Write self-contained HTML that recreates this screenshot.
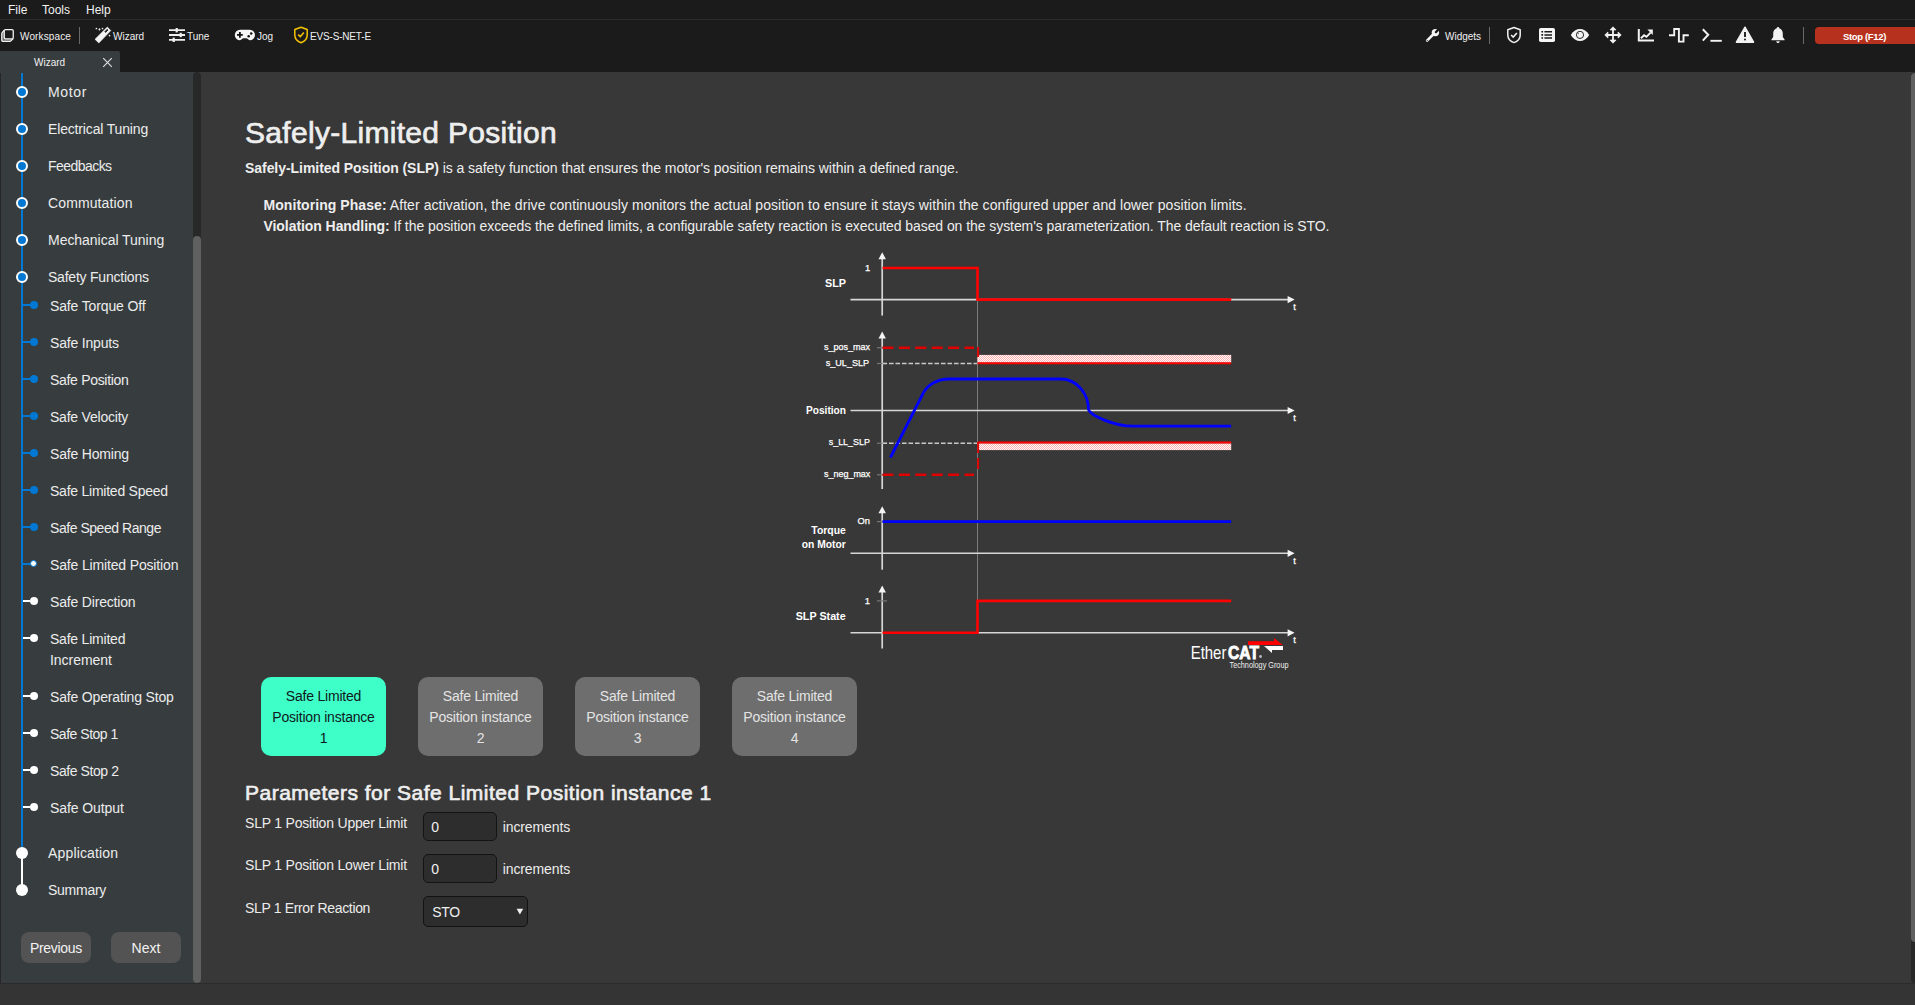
<!DOCTYPE html>
<html><head><meta charset="utf-8">
<style>
html,body{margin:0;padding:0;}
body{width:1915px;height:1005px;overflow:hidden;background:#1b1b1b;position:relative;font-family:"Liberation Sans",sans-serif;color:#eeeeee;}
.a{position:absolute;white-space:nowrap;}
#menubar{left:0;top:0;width:1915px;height:19px;background:#1b1b1b;}
#menuline{left:0;top:19px;width:1915px;height:1px;background:#2c2c2c;}
.menu{font-size:12px;top:3px;color:#f2f2f2;}
.tb{font-size:10px;color:#f0f0f0;top:31.2px;}
.sep{width:1px;background:#6a6a6a;}
#tab{left:0;top:51px;width:120px;height:22px;background:#373d3f;border-radius:0 2px 0 0;}
#sidebar{left:0;top:72px;width:201px;height:911px;background:#373d3f;}
#sideborder{left:0;top:73px;width:1px;height:910px;background:#262626;}
#strack{left:193px;top:72px;width:8px;height:911px;background:#282828;border-radius:4px;}
#sthumb{left:193px;top:236px;width:8px;height:747px;background:#606060;border-radius:4px;}
#main{left:201px;top:72px;width:1714px;height:911px;background:#383838;}
#rtrack{left:1911px;top:72px;width:4px;height:911px;background:#282828;border-radius:4px 0 0 4px;}
#rthumb{left:1911px;top:73px;width:4px;height:869px;background:#606060;border-radius:4px 0 0 4px;}
#bottom{left:0;top:983px;width:1915px;height:22px;background:#343434;}
#bottomline{left:0;top:983px;width:1915px;height:1px;background:#2b2b2b;}
.si{font-size:14px;color:#ececec;}
.vline{background:#0078d4;width:2px;}
.big{width:8px;height:8px;border:2px solid #fff;background:#0078d4;border-radius:50%;}
.bigw{width:12px;height:12px;background:#fff;border-radius:50%;}
.hcon{height:2px;width:8px;background:#0078d4;}
.dot{width:8px;height:8px;border-radius:50%;background:#0078d4;}
.btn{background:#535353;border-radius:8px;font-size:14px;color:#f2f2f2;text-align:center;line-height:33px;height:31px;width:70px;}
.inst{width:125px;height:79px;border-radius:9px;background:#6e6e6e;color:#e2e2e2;font-size:14px;text-align:center;line-height:21px;box-sizing:border-box;padding-top:7px;white-space:normal;}
.inst.on{background:#3cffc8;color:#1e1e1e;}
.lbl{font-size:14px;color:#e6e6e6;}
.inp{background:#2c2c2c;border:1px solid #111;border-radius:5px;box-sizing:border-box;height:29px;width:74px;}
</style></head>
<body>
<div id="menubar" class="a"></div>
<div id="menuline" class="a"></div>
<div class="a menu" style="left:8px;">File</div>
<div class="a menu" style="left:42px;">Tools</div>
<div class="a menu" style="left:86px;">Help</div>

<div id="main" class="a"></div>
<div id="bottom" class="a"></div>
<div id="bottomline" class="a"></div>
<div id="tab" class="a"></div>
<div id="sidebar" class="a"></div>
<div id="sideborder" class="a"></div>
<div id="strack" class="a"></div>
<div id="sthumb" class="a"></div>
<div id="rtrack" class="a"></div>
<div id="rthumb" class="a"></div>


<!-- toolbar left -->
<svg class="a" style="left:0;top:25px" width="18" height="20" viewBox="0 0 18 20">
  <path d="M1.8 8.2 L4.25 5.4 V13.85 H13.25 L10.6 16.4 H1.8 Z" fill="#6a6a6a"/>
  <path d="M4.3 5.2 L2.3 7.4 Q1.8 7.9 1.8 8.8 V15.6 Q1.8 16.4 2.6 16.4 H9.9 Q10.4 16.4 10.9 15.9 L13.2 13.6" fill="none" stroke="#f2f2f2" stroke-width="1.3" stroke-linejoin="round"/>
  <rect x="4.25" y="4.55" width="9" height="9.3" rx="1.3" fill="#1b1b1b" stroke="#f2f2f2" stroke-width="1.3"/>
</svg>
<div class="a tb" style="left:20px;letter-spacing:0.13px">Workspace</div>
<div class="a sep" style="left:79px;top:27px;height:17px"></div>
<svg class="a" style="left:90px;top:24px" width="24" height="22" viewBox="0 0 24 22">
  <path d="M5 15.3 L8.8 19 L20.8 6.6 L17.3 3.1 Z" fill="#f4f4f4" stroke="#f4f4f4" stroke-width="0.6" stroke-linejoin="round"/>
  <path d="M15.6 8.4 L17.9 6 L17.2 5.3 L14.9 7.7 Z" fill="#1b1b1b" stroke="#1b1b1b" stroke-width="0.9" stroke-linejoin="round"/>
  <circle cx="6.4" cy="4.5" r="0.85" fill="#eee"/><path d="M9.5 3.9 L10.6 5.6 L9.5 6.8 L8.3 5.6 Z" fill="#eee"/><circle cx="12.5" cy="4.5" r="0.85" fill="#eee"/><circle cx="19.5" cy="11.6" r="0.85" fill="#eee"/>
</svg>
<div class="a tb" style="left:113px;letter-spacing:0px">Wizard</div>
<svg class="a" style="left:168px;top:27px" width="18" height="16" viewBox="0 0 18 16">
  <path d="M1 3.2 H17 M1 8 H17 M1 12.8 H17" stroke="#f0f0f0" stroke-width="1.8"/>
  <rect x="7.6" y="1" width="2.2" height="4.4" fill="#f0f0f0"/>
  <rect x="11.6" y="5.8" width="2.2" height="4.4" fill="#f0f0f0"/>
  <rect x="4.6" y="10.6" width="2.2" height="4.4" fill="#f0f0f0"/>
</svg>
<div class="a tb" style="left:187px;letter-spacing:0px">Tune</div>
<svg class="a" style="left:234px;top:29px" width="22" height="12" viewBox="0 0 22 12">
  <path d="M6 0.8 H15.8 A5.2 5.2 0 0 1 15.8 11.2 C14.4 11.2 13.7 9.3 12.2 9.3 H9.6 C8.1 9.3 7.4 11.2 6 11.2 A5.2 5.2 0 0 1 6 0.8 Z" fill="#f6f6f6"/>
  <path d="M5.9 3 V8.8 M3 5.9 H8.8" stroke="#111" stroke-width="1.8"/>
  <circle cx="17.2" cy="4.6" r="1.25" fill="#111"/><circle cx="14.7" cy="7.3" r="1.25" fill="#111"/>
</svg>
<div class="a tb" style="left:257px;letter-spacing:0px">Jog</div>
<svg class="a" style="left:293px;top:26px" width="16" height="18" viewBox="0 0 16 18">
  <path d="M8 1.2 L14.2 3.5 V9 C14.2 12.8 11.4 15.5 8 16.8 C4.6 15.5 1.8 12.8 1.8 9 V3.5 Z" fill="none" stroke="#f5c400" stroke-width="1.5" stroke-linejoin="round"/>
  <path d="M5.2 8.6 L7.3 10.6 L10.9 6.6" fill="none" stroke="#f5c400" stroke-width="1.5"/>
</svg>
<div class="a tb" style="left:310px;letter-spacing:-0.17px">EVS-S-NET-E</div>

<!-- toolbar right -->
<svg class="a" style="left:1425px;top:28px" width="16" height="15" viewBox="0 0 16 15">
  <path d="M2.1 12.6 L8.6 6" stroke="#f4f4f4" stroke-width="2.5" stroke-linecap="round"/>
  <circle cx="10.4" cy="4.6" r="3.7" fill="#f4f4f4"/>
  <path d="M10.9 4.1 L14.6 0.4" stroke="#1b1b1b" stroke-width="2.3" stroke-linecap="round"/>
  <circle cx="2.2" cy="12.5" r="0.6" fill="#1b1b1b"/>
</svg>
<div class="a tb" style="left:1445px;letter-spacing:0px">Widgets</div>
<div class="a sep" style="left:1489px;top:27px;height:17px"></div>
<svg class="a" style="left:1506px;top:26px" width="16" height="18" viewBox="0 0 16 18">
  <path d="M8 1.5 L14.2 3.8 V9 C14.2 12.8 11.4 15.4 8 16.6 C4.6 15.4 1.8 12.8 1.8 9 V3.8 Z" fill="none" stroke="#f0f0f0" stroke-width="1.5" stroke-linejoin="round"/>
  <path d="M5.1 9 L7.2 11 L10.9 7" fill="none" stroke="#f0f0f0" stroke-width="1.6"/>
</svg>
<svg class="a" style="left:1538px;top:27px" width="18" height="16" viewBox="0 0 18 16">
  <rect x="1" y="1" width="16" height="14" rx="1.8" fill="#f6f6f6"/>
  <path d="M3.4 4.8 H5.1 M3.4 7.9 H5.1 M3.4 11 H5.1" stroke="#111" stroke-width="1.6"/>
  <path d="M6.4 4.8 H14 M6.4 7.9 H14 M6.4 11 H14" stroke="#1b1b1b" stroke-width="1.5"/>
</svg>
<svg class="a" style="left:1570px;top:27px" width="20" height="15" viewBox="0 0 20 15">
  <path d="M0.8 7.9 C3.3 3.8 6.5 1.9 10 1.9 C13.5 1.9 16.7 3.8 19.2 7.9 C16.7 12 13.5 13.9 10 13.9 C6.5 13.9 3.3 12 0.8 7.9 Z" fill="#f4f4f4"/>
  <circle cx="10" cy="7.9" r="3.6" fill="none" stroke="#111" stroke-width="0.9"/>
  <path d="M7.6 5.9 L8.6 6.8" stroke="#111" stroke-width="1"/>
</svg>
<svg class="a" style="left:1604px;top:26px" width="18" height="18" viewBox="0 0 18 18">
  <path d="M9 2.5 V15.5 M2.5 9 H15.5" stroke="#f2f2f2" stroke-width="1.8"/>
  <path d="M9 0.8 L12 3.9 H6 Z M9 17.2 L12 14.1 H6 Z M0.8 9 L3.9 6 V12 Z M17.2 9 L14.1 6 V12 Z" fill="#f2f2f2" stroke="#f2f2f2" stroke-width="0.8" stroke-linejoin="round"/>
</svg>
<svg class="a" style="left:1637px;top:28px" width="18" height="14" viewBox="0 0 18 14">
  <path d="M1.8 0.9 V12.6 H17" fill="none" stroke="#f4f4f4" stroke-width="2"/>
  <path d="M3.9 10.3 L7.1 7.2 L9.4 8.8 L13.6 4.6" fill="none" stroke="#f4f4f4" stroke-width="1.9"/>
  <path d="M10.4 1.6 H15.8 V7 Z" fill="#f4f4f4"/>
</svg>
<svg class="a" style="left:1668px;top:27px" width="22" height="16" viewBox="0 0 22 16">
  <path d="M1 8.2 H6.2 V2 H10.9 V14.6 H15.5 V8.2 H20.8" fill="none" stroke="#f4f4f4" stroke-width="1.9"/>
</svg>
<svg class="a" style="left:1701px;top:28px" width="22" height="15" viewBox="0 0 22 15">
  <path d="M1.8 1.2 L7.2 6.8 L1.8 12.6" fill="none" stroke="#f2f2f2" stroke-width="2"/>
  <path d="M9.4 12.8 H20.8" stroke="#f2f2f2" stroke-width="1.9"/>
</svg>
<svg class="a" style="left:1735px;top:26px" width="20" height="18" viewBox="0 0 20 18">
  <path d="M10 1.2 L18.6 16.2 H1.4 Z" fill="#f2f2f2" stroke="#f2f2f2" stroke-width="1.4" stroke-linejoin="round"/>
  <path d="M10 6 V11" stroke="#1b1b1b" stroke-width="1.9"/>
  <circle cx="10" cy="13.4" r="1" fill="#1b1b1b"/>
</svg>
<svg class="a" style="left:1770px;top:26px" width="16" height="18" viewBox="0 0 16 18">
  <path d="M8 1 C8.8 1 9.2 1.6 9.2 2.3 C11.6 2.9 12.8 5 12.8 7.4 V11 L14.6 13.6 V14.2 H1.4 V13.6 L3.2 11 V7.4 C3.2 5 4.4 2.9 6.8 2.3 C6.8 1.6 7.2 1 8 1 Z" fill="#f2f2f2"/>
  <path d="M6.3 15.2 H9.7 C9.7 16.3 8.9 17 8 17 C7.1 17 6.3 16.3 6.3 15.2 Z" fill="#f2f2f2"/>
</svg>
<div class="a sep" style="left:1803px;top:27px;height:17px"></div>
<div class="a" style="left:1815px;top:27px;width:110px;height:17px;background:#b7321e;border-radius:4px;"></div>
<div class="a" style="left:1843px;top:30.5px;font-size:9.5px;font-weight:700;color:#fff;letter-spacing:-0.35px">Stop (F12)</div>

<!-- tab -->
<div class="a" style="left:34px;top:56.8px;font-size:10px;color:#f0f0f0;">Wizard</div>
<svg class="a" style="left:101.5px;top:56.5px" width="11" height="11" viewBox="0 0 11 11">
  <path d="M1.2 1.2 L9.8 9.8 M9.8 1.2 L1.2 9.8" stroke="#dcdcdc" stroke-width="1.2"/>
</svg>

<!-- sidebar -->
<div class="a" style="left:21px;top:73px;width:2px;height:775px;background:#0078d4"></div>
<div class="a" style="left:21px;top:853px;width:2px;height:37px;background:#fff"></div>
<div class="a" style="left:16px;top:85.9px;width:8px;height:8px;border:2px solid #fff;background:#0078d4;border-radius:50%"></div>
<div class="a si" style="left:48px;top:84.25px;line-height:16px;letter-spacing:0.650px;">Motor</div>
<div class="a" style="left:16px;top:122.9px;width:8px;height:8px;border:2px solid #fff;background:#0078d4;border-radius:50%"></div>
<div class="a si" style="left:48px;top:121.25px;line-height:16px;letter-spacing:-0.156px;">Electrical Tuning</div>
<div class="a" style="left:16px;top:159.9px;width:8px;height:8px;border:2px solid #fff;background:#0078d4;border-radius:50%"></div>
<div class="a si" style="left:48px;top:158.25px;line-height:16px;letter-spacing:-0.550px;">Feedbacks</div>
<div class="a" style="left:16px;top:196.9px;width:8px;height:8px;border:2px solid #fff;background:#0078d4;border-radius:50%"></div>
<div class="a si" style="left:48px;top:195.25px;line-height:16px;letter-spacing:0.120px;">Commutation</div>
<div class="a" style="left:16px;top:233.9px;width:8px;height:8px;border:2px solid #fff;background:#0078d4;border-radius:50%"></div>
<div class="a si" style="left:48px;top:232.25px;line-height:16px;letter-spacing:-0.031px;">Mechanical Tuning</div>
<div class="a" style="left:16px;top:270.9px;width:8px;height:8px;border:2px solid #fff;background:#0078d4;border-radius:50%"></div>
<div class="a si" style="left:48px;top:269.25px;line-height:16px;letter-spacing:-0.220px;">Safety Functions</div>
<div class="a" style="left:23px;top:304.2px;width:8px;height:2px;background:#0078d4"></div>
<div class="a" style="left:30px;top:301.2px;width:8px;height:8px;border-radius:50%;background:#0078d4"></div>
<div class="a si" style="left:50px;top:298.25px;line-height:16px;letter-spacing:-0.136px;">Safe Torque Off</div>
<div class="a" style="left:23px;top:341.1px;width:8px;height:2px;background:#0078d4"></div>
<div class="a" style="left:30px;top:338.1px;width:8px;height:8px;border-radius:50%;background:#0078d4"></div>
<div class="a si" style="left:50px;top:335.15px;line-height:16px;letter-spacing:-0.190px;">Safe Inputs</div>
<div class="a" style="left:23px;top:378.0px;width:8px;height:2px;background:#0078d4"></div>
<div class="a" style="left:30px;top:375.0px;width:8px;height:8px;border-radius:50%;background:#0078d4"></div>
<div class="a si" style="left:50px;top:372.05px;line-height:16px;letter-spacing:-0.308px;">Safe Position</div>
<div class="a" style="left:23px;top:415.0px;width:8px;height:2px;background:#0078d4"></div>
<div class="a" style="left:30px;top:412.0px;width:8px;height:8px;border-radius:50%;background:#0078d4"></div>
<div class="a si" style="left:50px;top:409.05px;line-height:16px;letter-spacing:-0.217px;">Safe Velocity</div>
<div class="a" style="left:23px;top:452.0px;width:8px;height:2px;background:#0078d4"></div>
<div class="a" style="left:30px;top:449.0px;width:8px;height:8px;border-radius:50%;background:#0078d4"></div>
<div class="a si" style="left:50px;top:446.05px;line-height:16px;letter-spacing:-0.180px;">Safe Homing</div>
<div class="a" style="left:23px;top:489.0px;width:8px;height:2px;background:#0078d4"></div>
<div class="a" style="left:30px;top:486.0px;width:8px;height:8px;border-radius:50%;background:#0078d4"></div>
<div class="a si" style="left:50px;top:483.05px;line-height:16px;letter-spacing:-0.241px;">Safe Limited Speed</div>
<div class="a" style="left:23px;top:526.1px;width:8px;height:2px;background:#0078d4"></div>
<div class="a" style="left:30px;top:523.1px;width:8px;height:8px;border-radius:50%;background:#0078d4"></div>
<div class="a si" style="left:50px;top:520.15px;line-height:16px;letter-spacing:-0.460px;">Safe Speed Range</div>
<div class="a" style="left:23px;top:562.9px;width:8px;height:2px;background:#0078d4"></div>
<div class="a" style="left:30px;top:559.9px;width:5px;height:5px;border:1.5px solid #0078d4;border-radius:50%;background:#fff"></div>
<div class="a si" style="left:50px;top:556.95px;line-height:16px;letter-spacing:-0.155px;">Safe Limited Position</div>
<div class="a" style="left:23px;top:599.8px;width:8px;height:2px;background:#fff"></div>
<div class="a" style="left:30px;top:596.8px;width:8px;height:8px;border-radius:50%;background:#fff"></div>
<div class="a si" style="left:50px;top:593.85px;line-height:16px;letter-spacing:-0.177px;">Safe Direction</div>
<div class="a" style="left:23px;top:636.7px;width:8px;height:2px;background:#fff"></div>
<div class="a" style="left:30px;top:633.7px;width:8px;height:8px;border-radius:50%;background:#fff"></div>
<div class="a si" style="left:50px;top:630.75px;line-height:16px;letter-spacing:-0.218px;">Safe Limited</div>
<div class="a si" style="left:50px;top:651.75px;line-height:16px;letter-spacing:-0.037px;">Increment</div>
<div class="a" style="left:23px;top:694.8px;width:8px;height:2px;background:#fff"></div>
<div class="a" style="left:30px;top:691.8px;width:8px;height:8px;border-radius:50%;background:#fff"></div>
<div class="a si" style="left:50px;top:688.85px;line-height:16px;letter-spacing:-0.167px;">Safe Operating Stop</div>
<div class="a" style="left:23px;top:731.8px;width:8px;height:2px;background:#fff"></div>
<div class="a" style="left:30px;top:728.8px;width:8px;height:8px;border-radius:50%;background:#fff"></div>
<div class="a si" style="left:50px;top:725.85px;line-height:16px;letter-spacing:-0.480px;">Safe Stop 1</div>
<div class="a" style="left:23px;top:768.6px;width:8px;height:2px;background:#fff"></div>
<div class="a" style="left:30px;top:765.6px;width:8px;height:8px;border-radius:50%;background:#fff"></div>
<div class="a si" style="left:50px;top:762.65px;line-height:16px;letter-spacing:-0.420px;">Safe Stop 2</div>
<div class="a" style="left:23px;top:806.2px;width:8px;height:2px;background:#fff"></div>
<div class="a" style="left:30px;top:803.2px;width:8px;height:8px;border-radius:50%;background:#fff"></div>
<div class="a si" style="left:50px;top:800.25px;line-height:16px;letter-spacing:-0.090px;">Safe Output</div>
<div class="a" style="left:16px;top:847.0px;width:12px;height:12px;background:#fff;border-radius:50%"></div>
<div class="a si" style="left:48px;top:845.35px;line-height:16px;letter-spacing:0.160px;">Application</div>
<div class="a" style="left:16px;top:883.9px;width:12px;height:12px;background:#fff;border-radius:50%"></div>
<div class="a si" style="left:48px;top:882.25px;line-height:16px;letter-spacing:-0.267px;">Summary</div>
<div class="a btn" style="left:21px;top:932px;letter-spacing:-0.3px">Previous</div>
<div class="a btn" style="left:111px;top:932px;">Next</div>
<!-- main -->
<div class="a" style="left:245px;top:115.60px;line-height:34px;font-size:30px;color:#eeeeee;-webkit-text-stroke:0.7px #eeeeee;letter-spacing:0.3px">Safely-Limited Position</div>
<div class="a" style="left:245px;top:160.15px;line-height:16px;font-size:14px;color:#eeeeee;letter-spacing:-0.05px"><b>Safely-Limited Position (SLP)</b> is a safety function that ensures the motor's position remains within a defined range.</div>
<div class="a" style="left:263.5px;top:197.45px;line-height:16px;font-size:14px;color:#eeeeee;letter-spacing:0.06px"><b>Monitoring Phase:</b> After activation, the drive continuously monitors the actual position to ensure it stays within the configured upper and lower position limits.</div>
<div class="a" style="left:263.5px;top:218.15px;line-height:16px;font-size:14px;color:#eeeeee;letter-spacing:-0.065px"><b>Violation Handling:</b> If the position exceeds the defined limits, a configurable safety reaction is executed based on the system's parameterization. The default reaction is STO.</div>
<div class="a" style="left:261px;top:677px;width:125px;height:79px;border-radius:10px;background:#3effc8"></div>
<div class="a" style="left:261px;width:125px;text-align:center;top:687.95px;line-height:16px;font-size:14px;color:#101820;letter-spacing:-0.2px">Safe Limited</div>
<div class="a" style="left:261px;width:125px;text-align:center;top:708.85px;line-height:16px;font-size:14px;color:#101820;letter-spacing:-0.2px">Position instance</div>
<div class="a" style="left:261px;width:125px;text-align:center;top:729.75px;line-height:16px;font-size:14px;color:#101820;letter-spacing:-0.2px">1</div>
<div class="a" style="left:418px;top:677px;width:125px;height:79px;border-radius:10px;background:#6e6e6e"></div>
<div class="a" style="left:418px;width:125px;text-align:center;top:687.95px;line-height:16px;font-size:14px;color:#e4e4e4;letter-spacing:-0.2px">Safe Limited</div>
<div class="a" style="left:418px;width:125px;text-align:center;top:708.85px;line-height:16px;font-size:14px;color:#e4e4e4;letter-spacing:-0.2px">Position instance</div>
<div class="a" style="left:418px;width:125px;text-align:center;top:729.75px;line-height:16px;font-size:14px;color:#e4e4e4;letter-spacing:-0.2px">2</div>
<div class="a" style="left:575px;top:677px;width:125px;height:79px;border-radius:10px;background:#6e6e6e"></div>
<div class="a" style="left:575px;width:125px;text-align:center;top:687.95px;line-height:16px;font-size:14px;color:#e4e4e4;letter-spacing:-0.2px">Safe Limited</div>
<div class="a" style="left:575px;width:125px;text-align:center;top:708.85px;line-height:16px;font-size:14px;color:#e4e4e4;letter-spacing:-0.2px">Position instance</div>
<div class="a" style="left:575px;width:125px;text-align:center;top:729.75px;line-height:16px;font-size:14px;color:#e4e4e4;letter-spacing:-0.2px">3</div>
<div class="a" style="left:732px;top:677px;width:125px;height:79px;border-radius:10px;background:#6e6e6e"></div>
<div class="a" style="left:732px;width:125px;text-align:center;top:687.95px;line-height:16px;font-size:14px;color:#e4e4e4;letter-spacing:-0.2px">Safe Limited</div>
<div class="a" style="left:732px;width:125px;text-align:center;top:708.85px;line-height:16px;font-size:14px;color:#e4e4e4;letter-spacing:-0.2px">Position instance</div>
<div class="a" style="left:732px;width:125px;text-align:center;top:729.75px;line-height:16px;font-size:14px;color:#e4e4e4;letter-spacing:-0.2px">4</div>
<div class="a" style="left:245px;top:780.52px;line-height:24px;font-size:21px;color:#eeeeee;-webkit-text-stroke:0.65px #eeeeee;letter-spacing:0.49px">Parameters for Safe Limited Position instance 1</div>
<!-- params -->
<div class="a" style="left:245px;top:814.85px;line-height:16px;font-size:14px;color:#ececec;letter-spacing:-0.2px">SLP 1 Position Upper Limit</div>
<div class="a" style="left:245px;top:857.15px;line-height:16px;font-size:14px;color:#ececec;letter-spacing:-0.2px">SLP 1 Position Lower Limit</div>
<div class="a" style="left:245px;top:900.15px;line-height:16px;font-size:14px;color:#ececec;letter-spacing:-0.35px">SLP 1 Error Reaction</div>
<div class="a" style="left:423.3px;top:812.3px;width:74.2px;height:29.2px;box-sizing:border-box;background:#2d2d2d;border:1px solid #131313;border-radius:5px"></div>
<div class="a" style="left:431.3px;top:819.45px;line-height:16px;font-size:14px;color:#f0f0f0">0</div>
<div class="a" style="left:502.7px;top:819.45px;line-height:16px;font-size:14px;color:#ececec;letter-spacing:-0.1px">increments</div>
<div class="a" style="left:423.3px;top:854.3px;width:74.2px;height:29.2px;box-sizing:border-box;background:#2d2d2d;border:1px solid #131313;border-radius:5px"></div>
<div class="a" style="left:431.3px;top:861.45px;line-height:16px;font-size:14px;color:#f0f0f0">0</div>
<div class="a" style="left:502.7px;top:861.45px;line-height:16px;font-size:14px;color:#ececec;letter-spacing:-0.1px">increments</div>
<div class="a" style="left:423.3px;top:896.1px;width:105.1px;height:30.7px;box-sizing:border-box;background:#2d2d2d;border:1px solid #131313;border-radius:5px"></div>
<div class="a" style="left:432.3px;top:903.85px;line-height:16px;font-size:14px;color:#f0f0f0;letter-spacing:-0.4px">STO</div>
<svg class="a" style="left:515.5px;top:907.5px" width="8" height="8" viewBox="0 0 8 8"><path d="M0.6 0.8 H7.2 L3.9 6.6 Z" fill="#f0f0f0"/></svg>
<!-- diagram -->
<svg class="a" style="left:780px;top:245px" width="530" height="430" viewBox="780 245 530 430">
<defs><pattern id="hatch" width="2" height="2" patternUnits="userSpaceOnUse"><rect width="2" height="2" fill="#ffffff"/><rect width="1" height="1" fill="#ffb0b0"/><rect x="1" y="1" width="1" height="1" fill="#ffb0b0"/></pattern></defs>
<g font-family="Liberation Sans, sans-serif" fill="#ffffff">
<line x1="977.5" y1="300" x2="977.5" y2="600" stroke="#7c7c7c" stroke-width="1"/>
<line x1="882.2" y1="258.2" x2="882.2" y2="315.6" stroke="#d6d6d6" stroke-width="1.7"/><path d="M882.2 252.2 L885.9 259.2 L878.5 259.2 Z" fill="#f4f4f4"/>
<line x1="850.5" y1="299.6" x2="1289" y2="299.6" stroke="#d6d6d6" stroke-width="1.6"/><path d="M1294.6 299.6 L1287.6 296.0 L1287.6 303.20000000000005 Z" fill="#f4f4f4"/>
<path d="M882.5 268 H977.5 V299.6 H1231.2" fill="none" stroke="#ff0000" stroke-width="2.6" stroke-linejoin="miter"/>
<line x1="882.2" y1="337.6" x2="882.2" y2="489" stroke="#d6d6d6" stroke-width="1.7"/><path d="M882.2 331.6 L885.9 338.6 L878.5 338.6 Z" fill="#f4f4f4"/>
<line x1="850.5" y1="410.5" x2="1289" y2="410.5" stroke="#d6d6d6" stroke-width="1.6"/><path d="M1294.6 410.5 L1287.6 406.9 L1287.6 414.1 Z" fill="#f4f4f4"/>
<line x1="877" y1="347.7" x2="887" y2="347.7" stroke="#777" stroke-width="1.2"/>
<line x1="877" y1="363.5" x2="887" y2="363.5" stroke="#777" stroke-width="1.2"/>
<line x1="877" y1="443.2" x2="887" y2="443.2" stroke="#777" stroke-width="1.2"/>
<line x1="877" y1="474.8" x2="887" y2="474.8" stroke="#777" stroke-width="1.2"/>
<line x1="882.5" y1="347.8" x2="974" y2="347.8" stroke="#e00000" stroke-width="2.4" stroke-dasharray="11 5.4"/>
<line x1="882.5" y1="474.8" x2="974" y2="474.8" stroke="#e00000" stroke-width="2.4" stroke-dasharray="11 5.4"/>
<line x1="882.5" y1="363.5" x2="977" y2="363.5" stroke="#c8c8c8" stroke-width="1.6" stroke-dasharray="4.6 1.9"/>
<line x1="882.5" y1="443.2" x2="977" y2="443.2" stroke="#c8c8c8" stroke-width="1.6" stroke-dasharray="4.6 1.9"/>
<rect x="977.5" y="354.9" width="253.7" height="7.8" fill="url(#hatch)"/>
<line x1="977.5" y1="363.2" x2="1231.2" y2="363.2" stroke="#ff0000" stroke-width="2"/>
<rect x="977.5" y="443.3" width="253.7" height="6.8" fill="url(#hatch)"/>
<line x1="977.5" y1="442.4" x2="1231.2" y2="442.4" stroke="#ff0000" stroke-width="2"/>
<line x1="978.1" y1="347" x2="978.1" y2="357" stroke="#e00000" stroke-width="2"/>
<line x1="978.1" y1="442" x2="978.1" y2="453" stroke="#e00000" stroke-width="2"/>
<line x1="978.1" y1="458" x2="978.1" y2="469" stroke="#e00000" stroke-width="2"/>
<path d="M890.4 457.5 L922.8 393.9 C926.5 386.5 935 379 949.7 379 L1061 379 C1076.2 379 1088.5 392.9 1088.5 409.8 C1091 416 1115 426.2 1133.3 426.2 L1231.2 426.2" fill="none" stroke="#0000ff" stroke-width="2.8"/>
<line x1="882.2" y1="512.2" x2="882.2" y2="569.7" stroke="#d6d6d6" stroke-width="1.7"/><path d="M882.2 506.2 L885.9 513.2 L878.5 513.2 Z" fill="#f4f4f4"/>
<line x1="850.5" y1="553.3" x2="1289" y2="553.3" stroke="#d6d6d6" stroke-width="1.6"/><path d="M1294.6 553.3 L1287.6 549.6999999999999 L1287.6 556.9 Z" fill="#f4f4f4"/>
<line x1="877" y1="521.6" x2="887" y2="521.6" stroke="#777" stroke-width="1.2"/>
<line x1="882.5" y1="521.6" x2="1231.2" y2="521.6" stroke="#0000ff" stroke-width="2.7"/>
<line x1="882.2" y1="591.6" x2="882.2" y2="648.5" stroke="#d6d6d6" stroke-width="1.7"/><path d="M882.2 585.6 L885.9 592.6 L878.5 592.6 Z" fill="#f4f4f4"/>
<line x1="850.5" y1="632.8" x2="1289" y2="632.8" stroke="#d6d6d6" stroke-width="1.6"/><path d="M1294.6 632.8 L1287.6 629.1999999999999 L1287.6 636.4 Z" fill="#f4f4f4"/>
<line x1="877" y1="600.9" x2="887" y2="600.9" stroke="#777" stroke-width="1.2"/>
<path d="M882.5 632.8 H977.5 V600.9 H1231.2" fill="none" stroke="#ff0000" stroke-width="2.6"/>
<text x="825" y="286.8" font-size="11" font-weight="700" textLength="21" lengthAdjust="spacingAndGlyphs">SLP</text>
<text stroke="#ffffff" stroke-width="0.25" x="865" y="270.9" font-size="9.5">1</text>
<text stroke="#ffffff" stroke-width="0.25" x="824" y="349.9" font-size="9" textLength="46" lengthAdjust="spacingAndGlyphs">s_pos_max</text>
<text stroke="#ffffff" stroke-width="0.25" x="825.7" y="366" font-size="9.5" textLength="43.5" lengthAdjust="spacingAndGlyphs">s_UL_SLP</text>
<text x="806" y="414" font-size="11" font-weight="700" textLength="40" lengthAdjust="spacingAndGlyphs">Position</text>
<text stroke="#ffffff" stroke-width="0.25" x="828.7" y="445.4" font-size="9.5" textLength="41.3" lengthAdjust="spacingAndGlyphs">s_LL_SLP</text>
<text stroke="#ffffff" stroke-width="0.25" x="824" y="476.9" font-size="9" textLength="46.3" lengthAdjust="spacingAndGlyphs">s_neg_max</text>
<text stroke="#ffffff" stroke-width="0.25" x="857.6" y="524.2" font-size="9.5" textLength="12.4" lengthAdjust="spacingAndGlyphs">On</text>
<text x="811.3" y="534.1" font-size="11" font-weight="700" textLength="34.5" lengthAdjust="spacingAndGlyphs">Torque</text>
<text x="801.8" y="547.9" font-size="11" font-weight="700" textLength="44" lengthAdjust="spacingAndGlyphs">on Motor</text>
<text stroke="#ffffff" stroke-width="0.25" x="864.7" y="604.2" font-size="9.5">1</text>
<text x="795.7" y="620.1" font-size="11" font-weight="700" textLength="50" lengthAdjust="spacingAndGlyphs">SLP State</text>
<text stroke="#ffffff" stroke-width="0.25" x="1293.2" y="310.3" font-size="9.5">t</text>
<text stroke="#ffffff" stroke-width="0.25" x="1293.2" y="421" font-size="9.5">t</text>
<text stroke="#ffffff" stroke-width="0.25" x="1293.2" y="564" font-size="9.5">t</text>
<text stroke="#ffffff" stroke-width="0.25" x="1293.2" y="642.8" font-size="9.5">t</text>
<text x="1190.7" y="658.8" font-size="19" fill="#ffffff" textLength="35.7" lengthAdjust="spacingAndGlyphs">Ether</text>
<text x="1228" y="658.6" font-size="19" font-weight="700" fill="#ffffff" stroke="#ffffff" stroke-width="0.9" textLength="31" lengthAdjust="spacingAndGlyphs">CAT</text>
<circle cx="1260.5" cy="656.5" r="1.4" fill="#bbb"/>
<path d="M1248 641.3 H1274 V638.1 L1282.8 645 H1248 Z" fill="#ff0000"/>
<path d="M1264 646 H1283 V650 H1272 V653 Z" fill="#ffffff"/>
<text x="1229.5" y="667.6" font-size="8.8" fill="#f0f0f0" textLength="59" lengthAdjust="spacingAndGlyphs">Technology Group</text>
</g></svg>
</body></html>
